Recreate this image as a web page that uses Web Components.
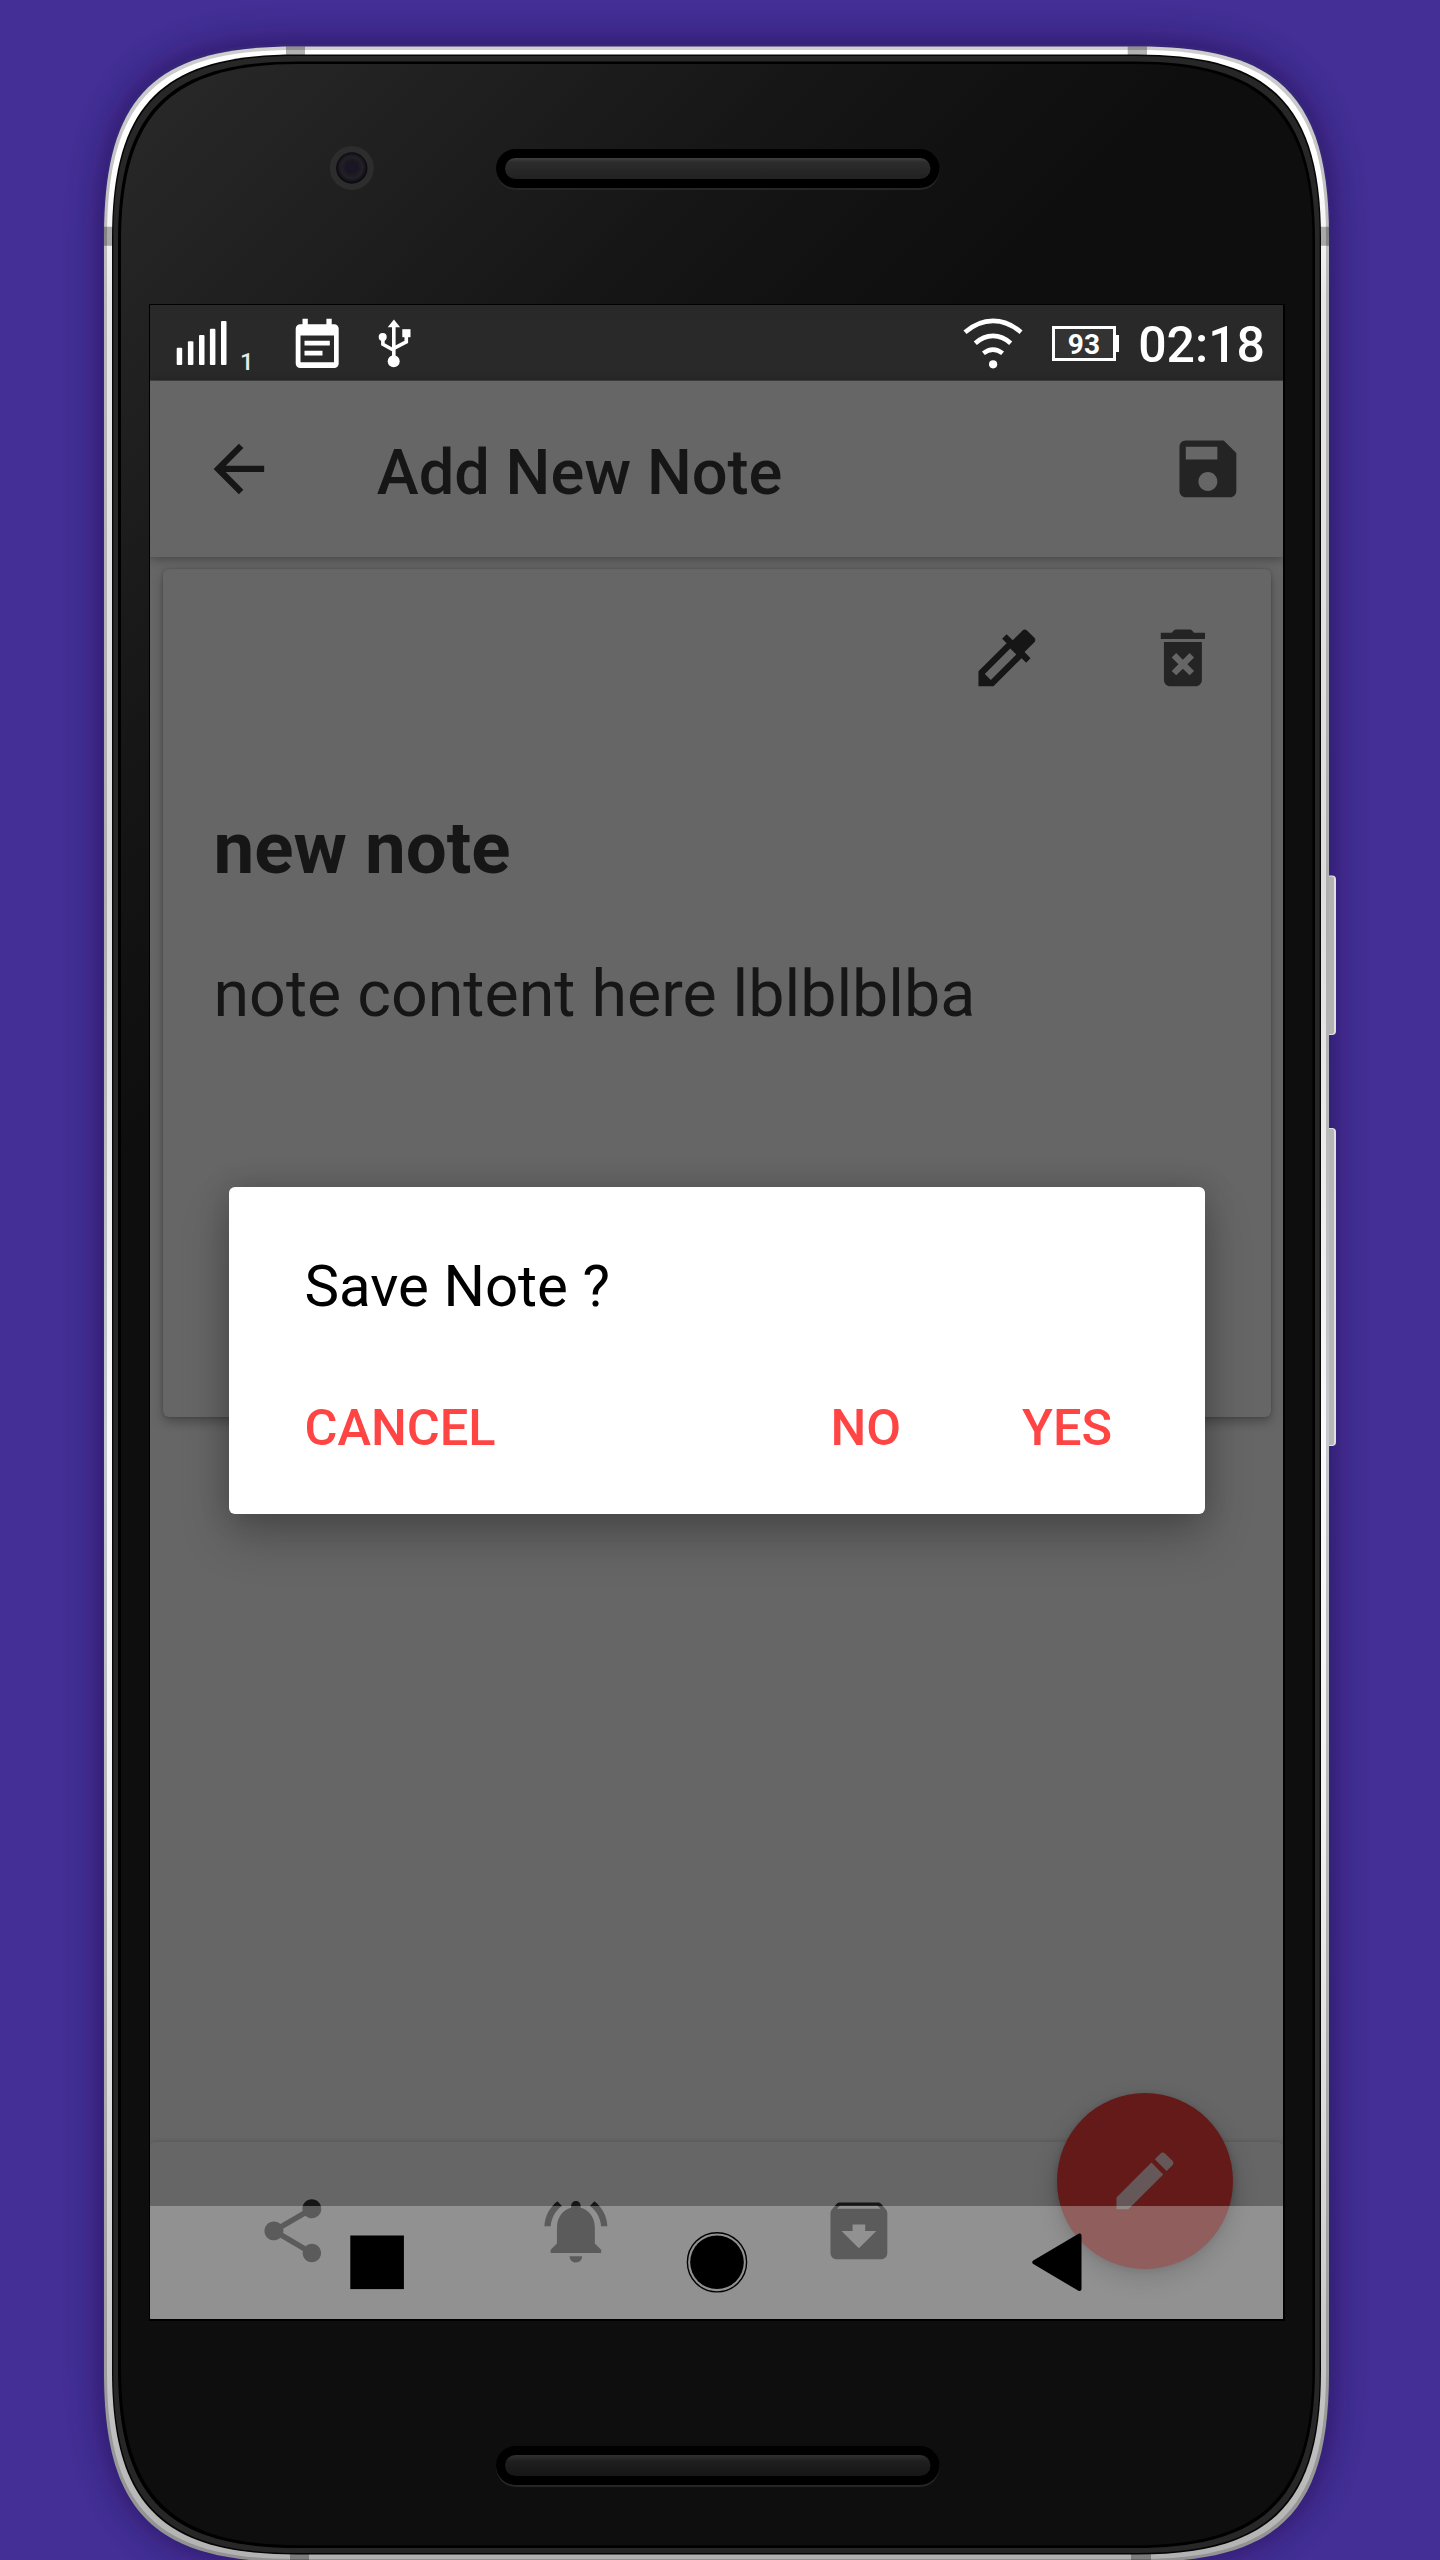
<!DOCTYPE html>
<html lang="en">
<head>
<meta charset="utf-8">
<title>Add New Note</title>
<style>
html, body { margin: 0; padding: 0; }
body { width: 1440px; height: 2560px; overflow: hidden; background: #432f95; font-family: Roboto, "Liberation Sans", sans-serif; }
</style>
</head>
<body>
<phone-frame>
  <status-bar time="02:18" battery="93" sim="1"></status-bar>
  <app-bar>Add New Note
    <md-icon slot="nav" name="back"></md-icon>
    <md-icon slot="action" name="save" style="color:#242424"></md-icon>
  </app-bar>
  <note-card>
    <md-icon slot="tools" name="dropper"></md-icon>
    <md-icon slot="tools" name="trash" style="color:#242424"></md-icon>
    <span slot="title">new note</span>
    <span slot="content">note content here lblblblba</span>
  </note-card>
  <bottom-bar>
    <md-icon name="share"></md-icon>
    <md-icon name="bell"></md-icon>
    <md-icon name="archive"></md-icon>
    <span></span>
  </bottom-bar>
  <fab-button slot="overlay"><md-icon name="edit"></md-icon></fab-button>
  <nav-keys slot="overlay"></nav-keys>
  <confirm-dialog slot="overlay">Save Note ?
    <span slot="neutral">CANCEL</span>
    <span slot="actions">NO</span>
    <span slot="actions">YES</span>
  </confirm-dialog>
</phone-frame>

<script>
const define = (name, render) => customElements.define(name, class extends HTMLElement {
  constructor() { super(); this.attachShadow({ mode: 'open' }); }
  connectedCallback() { this.shadowRoot.innerHTML = render(this); }
});

/* Rounded body outline with continuous-curvature corners. */
const outline = (l, t, r, b, a, k) =>
  `M${l} ${t + a}C${l} ${t + k} ${l + k} ${t} ${l + a} ${t}H${r - a}C${r - k} ${t} ${r} ${t + k} ${r} ${t + a}` +
  `V${b - a}C${r} ${b - k} ${r - k} ${b} ${r - a} ${b}H${l + a}C${l + k} ${b} ${l} ${b - k} ${l} ${b - a}Z`;

const speaker = (y, top) => `
  <rect x="496" y="${y + 1.5}" width="443.5" height="39.5" rx="19.7" fill="#262626"/>
  <rect x="496" y="${y}" width="443.5" height="39" rx="19.5" fill="#000"/>
  <rect x="505" y="${y + 9}" width="425.5" height="21" rx="10.5" fill="url(#${top ? 'spk' : 'spk2'})"/>`;

define('phone-frame', () => `
<style>
:host { display: grid; width: 1440px; height: 2560px; overflow: hidden; }
svg, .screen { grid-area: 1 / 1; }
.screen { position: relative; margin: 305px 0 0 150px; width: 1133px; height: 2014px; display: flex; flex-direction: column;
  background: #666; overflow: hidden; }
</style>
<svg width="1440" height="2560" viewBox="0 0 1440 2560">
  <defs>
    <linearGradient id="body" gradientUnits="userSpaceOnUse" x1="120" y1="120" x2="640" y2="640"><stop offset="0" stop-color="#282828"/><stop offset=".65" stop-color="#151515"/><stop offset="1" stop-color="#0e0e0e"/></linearGradient>
    <linearGradient id="metal" gradientUnits="userSpaceOnUse" x1="0" y1="46" x2="0" y2="2562">
      <stop offset="0" stop-color="#fff"/><stop offset=".05" stop-color="#fff"/><stop offset=".1" stop-color="#e6e6e6"/><stop offset=".33" stop-color="#dcdcdc"/>
      <stop offset=".4" stop-color="#e6e6e6"/><stop offset=".55" stop-color="#fafafa"/><stop offset=".7" stop-color="#f2f2f2"/><stop offset=".86" stop-color="#d4d4d4"/><stop offset=".93" stop-color="#c4c4c4"/><stop offset="1" stop-color="#b2b2b2"/></linearGradient>
    <linearGradient id="rim" gradientUnits="userSpaceOnUse" x1="0" y1="46" x2="0" y2="2562">
      <stop offset="0" stop-color="#cfcfcf"/><stop offset=".1" stop-color="#b8b8b8"/><stop offset=".35" stop-color="#aeaeae"/><stop offset=".55" stop-color="#c6cace"/><stop offset=".8" stop-color="#adadad"/><stop offset="1" stop-color="#929292"/></linearGradient>
    <linearGradient id="spk" x1="0" y1="0" x2="0" y2="1"><stop offset="0" stop-color="#404040"/><stop offset=".2" stop-color="#2c2c2c"/><stop offset="1" stop-color="#212121"/></linearGradient>
    <linearGradient id="spk2" x1="0" y1="0" x2="0" y2="1"><stop offset="0" stop-color="#303030"/><stop offset=".3" stop-color="#1f1f1f"/><stop offset="1" stop-color="#161616"/></linearGradient>
    <radialGradient id="lens" cx=".5" cy=".48"><stop offset="0" stop-color="#1a1530"/><stop offset=".35" stop-color="#19161f"/><stop offset=".7" stop-color="#232028"/><stop offset="1" stop-color="#0a090d"/></radialGradient>
    <filter id="blur" x="-10%" y="-10%" width="120%" height="120%"><feGaussianBlur stdDeviation="18"/></filter>
  </defs>
  <path d="${outline(103, 44, 1330, 2560, 190, 50)}" fill="#1c1040" opacity=".64" filter="url(#blur)"/>
  <g><rect x="1322" y="875.5" width="14" height="159.5" rx="4" fill="#e0e0e0"/><rect x="1322" y="876.5" width="12" height="157.5" rx="2" fill="#b2b2b2"/>
  <rect x="1322" y="1128" width="14" height="318" rx="4" fill="#e0e0e0"/><rect x="1322" y="1129" width="12" height="316" rx="2" fill="#b6b6b6"/></g>
  <path d="${outline(104, 46.5, 1329, 2562, 190, 50)}" fill="url(#rim)"/>
  <path d="${outline(107, 50, 1326, 2559, 187, 50)}" fill="url(#metal)"/>
  <path d="M286 46.5h19v10h-19zM1127.7 46.5h19.3v10h-19.3zM104 226.7h9v19h-9zM1320 226.7h9v19h-9zM290 2553h19v9h-19zM1131 2553h20v9h-20z" fill="#000" opacity=".3"/>
  <path d="${outline(112, 54.5, 1321, 2554.5, 184, 50)}" fill="#050505"/>
  <path d="${outline(113.3, 56, 1319.7, 2553, 183, 50)}" fill="#272727"/>
  <path d="${outline(118, 61.5, 1315, 2548, 180, 50)}" fill="#000"/>
  <path d="${outline(121, 64, 1312.5, 2545.3, 178, 50)}" fill="url(#body)"/>
  <circle cx="351.8" cy="168" r="22" fill="#2d2d2d"/><circle cx="351.8" cy="168" r="15.7" fill="url(#lens)"/>
  ${speaker(149, true)}${speaker(2446, false)}
  <rect x="149" y="304" width="1136" height="2017" fill="#000"/>
</svg>
<div class="screen"><slot></slot><slot name="overlay"></slot></div>`);

define('status-bar', el => `
<style>
:host { display: flex; align-items: center; box-sizing: border-box; height: 76px; flex: none; background: #292929; border-bottom: 1px solid #444; color: #fff; }
.left { flex: 1; display: flex; align-self: stretch; }
svg { display: block; }
.sim { font-size: 24px; font-weight: 500; line-height: 30px; color: #e8e8e8; margin: 41.5px 0 0 6px; width: 54px; }
.batt { box-sizing: border-box; width: 63.5px; height: 35.5px; border: 3.5px solid #fff; background: #333; font-weight: 700; font-size: 28px; line-height: 31px; text-align: center; margin: 2px 0 0 29px; }
.nub { width: 3.5px; height: 17px; background: #fff; margin-right: 19px; margin-top: 2px; }
.time { font-weight: 500; font-size: 50px; line-height: 60px; padding-top: 4px; margin-right: 18px; }
</style>
<div class="left">
  <svg width="84" height="75" viewBox="150 305 84 75" fill="#fff"><rect x="176.7" y="347.7" width="5.5" height="17.3" rx="1"/><rect x="187.9" y="341.3" width="5.5" height="23.7" rx="1"/><rect x="199" y="335" width="5.5" height="30" rx="1"/><rect x="209.9" y="328.7" width="5.5" height="36.3" rx="1"/><rect x="221" y="321" width="5.5" height="44" rx="1"/></svg>
  <span class="sim">${el.getAttribute('sim')}</span>
  <svg width="130" height="75" viewBox="294 305 130 75"><g fill="#fff">
    <path fill-rule="evenodd" d="M302.5 318.7h5.3v5.5h18.6v-5.5h5.3v5.5h2.5a4.5 4.5 0 0 1 4.5 4.5v34.8a4.5 4.5 0 0 1-4.5 4.5h-34a4.5 4.5 0 0 1-4.5-4.5v-34.8a4.5 4.5 0 0 1 4.5-4.5h2.3zM300.5 335.5v26.8h33.5v-26.8zM304.5 340.8h25.3v4.7h-25.3zM304.5 350.8h18v4.7h-18z"/>
    <circle cx="393.7" cy="361.3" r="6"/><path d="M393.9 319.5l6.2 7.8h-12.4z"/><circle cx="382.7" cy="337" r="4"/><rect x="402.3" y="329.2" width="8.2" height="8"/></g>
    <path d="M393.8 325v34M382.9 338v6.3l10.8 6M406.3 336v5.8l-12.5 6.6" fill="none" stroke="#fff" stroke-width="3.6"/>
  </svg>
</div>
<svg width="60" height="75" viewBox="963.5 305 60 75" fill="none" stroke="#fff" stroke-width="4.6"><path d="M965.5 332.3q13-11.4 28-11.4t28 11.4M975.8 343.3q8-7.4 17.7-7.4t17.7 7.4M983.9 353.3q9.6-7.4 19.2 0"/><circle cx="993.6" cy="364.3" r="4.1" fill="#fff" stroke="none"/></svg>
<div class="batt">${el.getAttribute('battery')}</div><div class="nub"></div>
<div class="time">${el.getAttribute('time')}</div>`);

define('app-bar', () => `
<style>
:host { display: flex; align-items: center; box-sizing: border-box; height: 176px; flex: none; padding: 0 37.5px 0 51px; background: #666; color: #161616; box-shadow: 0 2px 10px rgba(0,0,0,.34); z-index: 1; }
h1 { flex: 1; margin: 6px 0 0 100px; font-size: 63.2px; line-height: 76px; font-weight: 500; }
</style>
<slot name="nav"></slot><h1><slot></slot></h1><slot name="action"></slot>`);

define('note-card', () => `
<style>
:host { display: flex; flex-direction: column; box-sizing: border-box; margin: 12px 12.5px 0 12.5px; height: 848px; padding: 50.5px 49.5px 0 51px; border-radius: 6px; background: #666; color: #161616;
  box-shadow: 0 5px 11px rgba(0,0,0,.28), 0 0 3px rgba(0,0,0,.2); flex: none; }
.tools { display: flex; justify-content: flex-end; gap: 100.5px; height: 76px; }
h2 { margin: 103.9px 0 0; font-size: 72.7px; line-height: 100px; font-weight: 700; }
p { margin: 44.6px 0 0; font-size: 64.5px; line-height: 100px; white-space: nowrap; }
</style>
<div class="tools"><slot name="tools"></slot></div>
<h2><slot name="title"></slot></h2><p><slot name="content"></slot></p>`);

define('bottom-bar', () => `
<style>
:host { display: grid; grid-template-columns: repeat(4, 1fr); justify-items: center; box-sizing: border-box; margin-top: auto; height: 177px; padding: 51px 0 0 1px; border-radius: 5px; background: #666; color: #161616; flex: none;
  box-shadow: 0 0 5px rgba(0,0,0,.2); }
</style><slot></slot>`);

define('fab-button', () => `
<style>
:host { position: absolute; left: 907px; top: 1787.5px; width: 176px; height: 176px; border-radius: 50%; background: #651a1a; color: #665858; display: grid; place-items: center;
  box-shadow: 0 11px 24px rgba(0,0,0,.26), 0 2px 6px rgba(0,0,0,.18); }
</style><slot></slot>`);

define('nav-keys', () => `
<style>
:host { position: absolute; inset: auto 0 0 0; height: 113.5px; background: rgba(237,237,237,.325); display: flex; justify-content: center; gap: 280px; align-items: center; }
svg { width: 60px; height: 62px; overflow: visible; display: block; }
</style>
<svg viewBox="0 0 60 62"><rect x="3.3" y="4.5" width="53.6" height="53.6"/></svg>
<svg viewBox="0 0 60 62"><circle cx="30" cy="31.3" r="26.8"/><circle cx="30" cy="31.3" r="29.6" fill="none" stroke="#000" stroke-width="1.4"/></svg>
<svg viewBox="0 0 60 62"><path d="M7.3 31.3L52.5 4.5V58.1Z" stroke="#000" stroke-width="4" stroke-linejoin="round"/></svg>`);

define('confirm-dialog', () => `
<style>
:host { position: absolute; left: 79px; top: 881.5px; box-sizing: border-box; width: 976px; height: 327px; padding: 59px 93px 0 75.5px; border-radius: 6px; background: #fff; color: #000;
  box-shadow: 0 24px 48px rgba(0,0,0,.24), 0 0 30px rgba(0,0,0,.18); }
.msg { font-size: 58.2px; line-height: 80px; }
.row { display: flex; margin-top: 72.5px; gap: 121px; font-size: 50.5px; line-height: 60px; font-weight: 500; color: #ff4444; }
.row slot:first-child { display: block; margin-right: auto; }
</style>
<div class="msg"><slot></slot></div>
<div class="row"><slot name="neutral"></slot><slot name="actions"></slot></div>`);

const ICONS = {
  back: 'M20 11H7.83l5.59-5.59L12 4l-8 8 8 8 1.41-1.41L7.83 13H20v-2z',
  save: 'M17 3H5c-1.11 0-2 .9-2 2v14c0 1.1.89 2 2 2h14c1.1 0 2-.9 2-2V7l-4-4zm-5 16c-1.66 0-3-1.34-3-3s1.34-3 3-3 3 1.34 3 3-1.34 3-3 3zm3-10H5V5h10v4z',
  dropper: 'M20.71 5.63l-2.34-2.34c-.39-.39-1.02-.39-1.41 0l-3.12 3.12-1.93-1.91-1.41 1.41 1.42 1.42L3 16.25V21h4.75l8.92-8.92 1.42 1.42 1.41-1.41-1.92-1.92 3.12-3.12c.4-.4.4-1.03.01-1.42zM6.92 19L5 17.08l8.06-8.06 1.92 1.92L6.92 19z',
  trash: 'M6 19c0 1.1.9 2 2 2h8c1.1 0 2-.9 2-2V7H6v12zm2.46-7.12l1.41-1.41L12 12.59l2.12-2.12 1.41 1.41L13.41 14l2.12 2.12-1.41 1.41L12 15.41l-2.12 2.12-1.41-1.41L10.59 14l-2.13-2.12zM15.5 4l-.6-.7a1 1 0 0 0-.7-.3H9.8a1 1 0 0 0-.7.3L8.5 4H5v2h14V4z',
  share: 'M18 16.08c-.76 0-1.44.3-1.96.77L8.91 12.7c.05-.23.09-.46.09-.7s-.04-.47-.09-.7l7.05-4.11c.54.5 1.25.81 2.04.81 1.66 0 3-1.34 3-3s-1.34-3-3-3-3 1.34-3 3c0 .24.04.47.09.7L8.04 9.81C7.5 9.31 6.79 9 6 9c-1.66 0-3 1.34-3 3s1.34 3 3 3c.79 0 1.5-.31 2.04-.81l7.12 4.16c-.05.21-.08.43-.08.65 0 1.61 1.31 2.92 2.92 2.92 1.61 0 2.92-1.31 2.92-2.92s-1.31-2.92-2.92-2.92z',
  bell: 'M7.58 4.08L6.15 2.65C3.75 4.48 2.17 7.3 2.03 10.5h2c.15-2.65 1.51-4.97 3.55-6.42zm12.39 6.42h2c-.15-3.2-1.73-6.02-4.12-7.85l-1.42 1.43c2.02 1.45 3.39 3.77 3.54 6.42zM18 11c0-3.07-1.64-5.64-4.5-6.32V4c0-.83-.67-1.5-1.5-1.5s-1.5.67-1.5 1.5v.68C7.63 5.36 6 7.92 6 11v5l-2 2v1h16v-1l-2-2v-5zm-6 11c.14 0 .27-.01.4-.04.65-.14 1.18-.58 1.44-1.18.1-.24.15-.5.15-.78h-4c.01 1.1.9 2 2.01 2z',
  archive: 'M20.54 5.23l-1.39-1.68C18.88 3.21 18.47 3 18 3H6c-.47 0-.88.21-1.16.55L3.46 5.23C3.17 5.57 3 6.02 3 6.5V19c0 1.1.9 2 2 2h14c1.1 0 2-.9 2-2V6.5c0-.48-.17-.93-.46-1.27zM12 17.5L6.5 12H10v-2h4v2h3.5L12 17.5zM5.12 5l.81-1h12l.94 1H5.12z',
  edit: 'M3 17.25V21h3.75L17.81 9.94l-3.75-3.75L3 17.25zM20.71 7.04c.39-.39.39-1.02 0-1.41l-2.34-2.34c-.39-.39-1.02-.39-1.41 0l-1.83 1.83 3.75 3.75 1.83-1.83z'
};
define('md-icon', el => `
<style>:host { display: block; width: 75.8px; height: 75.8px; flex: none; } svg { display: block; width: 100%; height: 100%; fill: currentColor; }</style>
<svg viewBox="0 0 24 24"><path d="${ICONS[el.getAttribute('name')]}"/></svg>`);
</script>
</body>
</html>
